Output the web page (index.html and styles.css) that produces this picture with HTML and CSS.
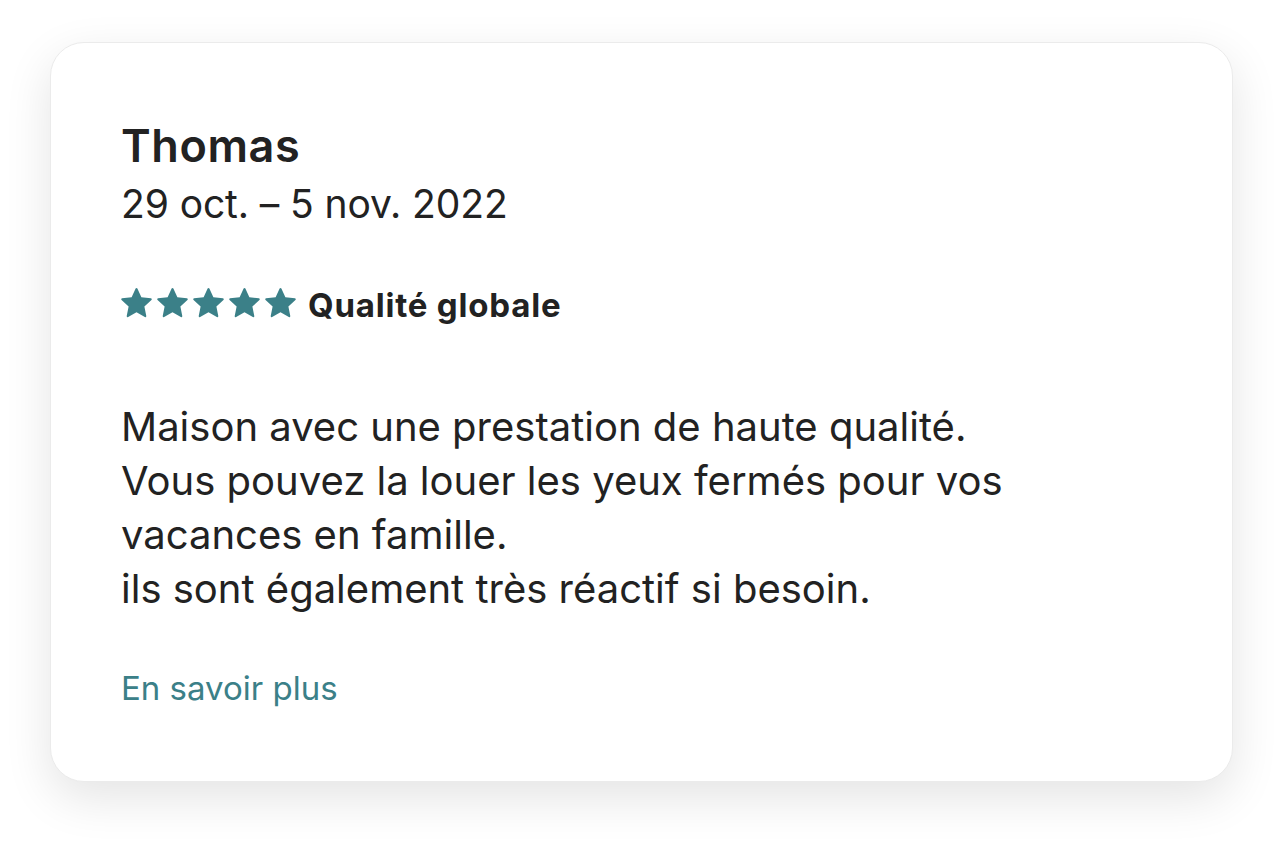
FILE: index.html
```html
<!DOCTYPE html>
<html lang="fr">
<head>
<meta charset="utf-8">
<link rel="stylesheet" href="styles.css">
</head>
<body>
<div class="page">
  <article class="card">
    <h1 class="name">Thomas</h1>
    <div class="date">29 oct. – 5 nov. 2022</div>
    <div class="rating">
      <div class="stars">
        <svg viewBox="0 0 32 32" class="star"><path d="M15.094 1.579l-4.124 8.885-9.86 1.27a1 1 0 0 0-.542 1.736l7.293 6.565-1.965 9.852a1 1 0 0 0 1.483 1.061L16 25.951l8.625 4.997a1 1 0 0 0 1.482-1.06l-1.965-9.853 7.293-6.565a1 1 0 0 0-.541-1.735l-9.86-1.271-4.127-8.885a1 1 0 0 0-1.814 0z"/></svg>
        <svg viewBox="0 0 32 32" class="star"><path d="M15.094 1.579l-4.124 8.885-9.86 1.27a1 1 0 0 0-.542 1.736l7.293 6.565-1.965 9.852a1 1 0 0 0 1.483 1.061L16 25.951l8.625 4.997a1 1 0 0 0 1.482-1.06l-1.965-9.853 7.293-6.565a1 1 0 0 0-.541-1.735l-9.86-1.271-4.127-8.885a1 1 0 0 0-1.814 0z"/></svg>
        <svg viewBox="0 0 32 32" class="star"><path d="M15.094 1.579l-4.124 8.885-9.86 1.27a1 1 0 0 0-.542 1.736l7.293 6.565-1.965 9.852a1 1 0 0 0 1.483 1.061L16 25.951l8.625 4.997a1 1 0 0 0 1.482-1.06l-1.965-9.853 7.293-6.565a1 1 0 0 0-.541-1.735l-9.86-1.271-4.127-8.885a1 1 0 0 0-1.814 0z"/></svg>
        <svg viewBox="0 0 32 32" class="star"><path d="M15.094 1.579l-4.124 8.885-9.86 1.27a1 1 0 0 0-.542 1.736l7.293 6.565-1.965 9.852a1 1 0 0 0 1.483 1.061L16 25.951l8.625 4.997a1 1 0 0 0 1.482-1.06l-1.965-9.853 7.293-6.565a1 1 0 0 0-.541-1.735l-9.86-1.271-4.127-8.885a1 1 0 0 0-1.814 0z"/></svg>
        <svg viewBox="0 0 32 32" class="star"><path d="M15.094 1.579l-4.124 8.885-9.86 1.27a1 1 0 0 0-.542 1.736l7.293 6.565-1.965 9.852a1 1 0 0 0 1.483 1.061L16 25.951l8.625 4.997a1 1 0 0 0 1.482-1.06l-1.965-9.853 7.293-6.565a1 1 0 0 0-.541-1.735l-9.86-1.271-4.127-8.885a1 1 0 0 0-1.814 0z"/></svg>
      </div>
      <span class="label">Qualité globale</span>
    </div>
    <p class="text">Maison avec une prestation de haute qualité.<br>Vous pouvez la louer les yeux fermés pour vos vacances en famille.<br>ils sont également très réactif si besoin.</p>
    <a class="more" href="#">En savoir plus</a>
  </article>
</div>
</body>
</html>
```

FILE: styles.css
```css
html, body {
  margin: 0;
  padding: 0;
  background: #ffffff;
}
body {
  font-family: Inter, "Noto Sans", sans-serif;
  color: #222222;
  min-height: 842px;
}
.page {
  padding: 42px 51px 60px 50px;
}
.card {
  box-sizing: border-box;
  width: 1183px;
  height: 740px;
  background: #fff;
  border: 1px solid #ebebeb;
  border-radius: 34px;
  box-shadow: 0 16px 48px rgba(0,0,0,0.11);
  padding: 75px 70px 0 70px;
  display: flex;
  flex-direction: column;
}
.name {
  margin: 0;
  font-size: 45px;
  font-weight: 600;
  line-height: 56px;
  letter-spacing: 0.6px;
}
.date {
  font-size: 39px;
  line-height: 60px;
  font-weight: 400;
  letter-spacing: -0.1px;
}
.rating {
  display: flex;
  align-items: center;
  margin-top: 51px;
  height: 40px;
  gap: 12px;
}
.stars {
  display: flex;
  gap: 5px;
  margin-bottom: 6px;
}
.star {
  width: 31px;
  height: 31px;
  fill: #3b8088;
}
.label {
  font-size: 33px;
  line-height: 40px;
  font-weight: 700;
  letter-spacing: 0.8px;
}
.text {
  margin: 75px 0 0 0;
  font-size: 40px;
  line-height: 54px;
  max-width: 900px;
}
.more {
  margin-top: 52px;
  font-size: 33px;
  line-height: 40px;
  color: #3b8088;
  text-decoration: none;
  align-self: flex-start;
}
```
